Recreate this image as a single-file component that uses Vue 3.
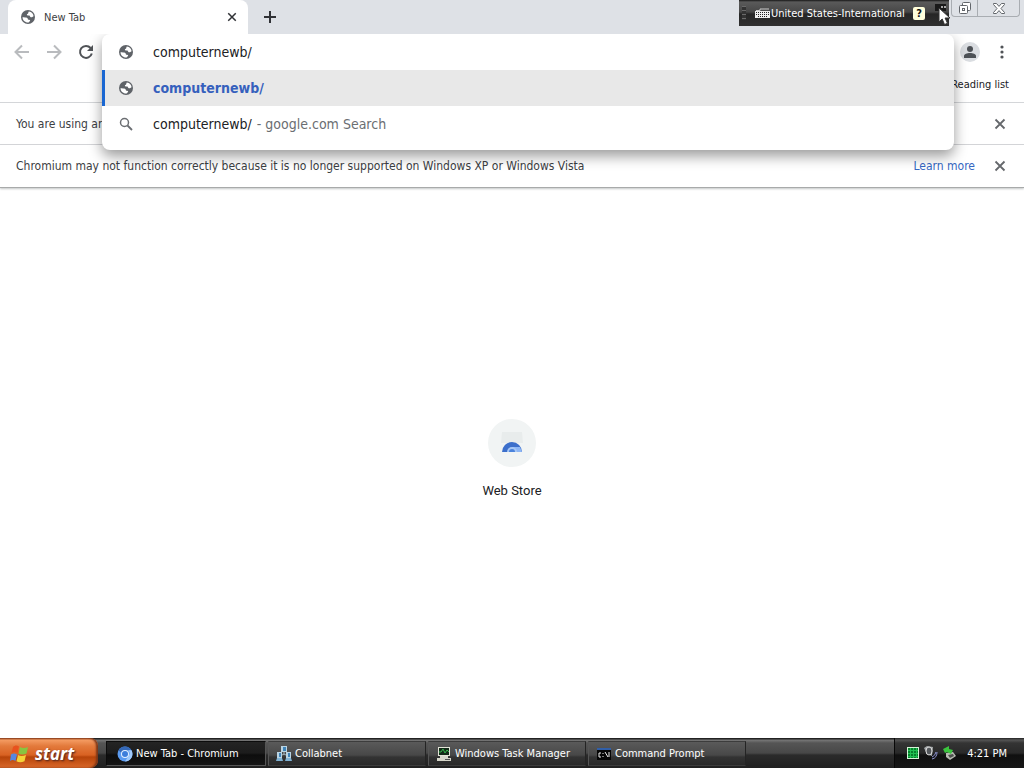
<template>
  <div class="desktop">
    <svg class="symbols" aria-hidden="true">
      <symbol id="globe" viewBox="0 0 16 16">
        <circle cx="8" cy="8" r="7" fill="#5f6368" />
        <path d="M9 2.6c2.5.4 4.4 2.3 4.6 4.7-1 .5-1.7 1.3-2.9.9-1-.4-.5-1.4-1.5-1.7-1-.2-2 .3-2.3-.7-.2-1 .9-.8 1.3-1.5.3-.6 0-1.3.8-1.7z" fill="#fff" />
        <path d="M2.5 8.2c1.5.3 3.7-.1 4.8.7.8.6.2 1.6 1.2 1.8 1 .1 1.8.1 1.6 1-.2.7-1 .9-1.5 1.7-3.4.3-6-2-6.1-5.2z" fill="#fff" />
      </symbol>
      <symbol id="cross" viewBox="0 0 12 12">
        <path d="M1.5 1.5l9 9M10.5 1.5l-9 9" fill="none" stroke="currentColor" stroke-width="1.8" />
      </symbol>
    </svg>

    <!-- Tab strip -->
    <header class="tab-strip">
      <div class="tab">
        <svg class="icon"><use href="#globe" /></svg>
        <span class="tab-title">New Tab</span>
        <button class="tab-close" aria-label="Close tab">
          <svg class="cross-small"><use href="#cross" /></svg>
        </button>
      </div>
      <button class="new-tab" aria-label="New tab">
        <svg width="12" height="12" viewBox="0 0 12 12">
          <path d="M6 0v12M0 6h12" stroke="#303236" stroke-width="2" />
        </svg>
      </button>
      <div class="window-buttons">
        <button class="window-button restore" aria-label="Restore">
          <svg width="14" height="14" viewBox="0 0 14 14" fill="#fff" stroke="#62666b">
            <rect x="4.5" y="1.5" width="8" height="8" rx="1" />
            <rect x="1.5" y="4.5" width="8" height="8" rx="1" />
            <rect x="4.5" y="7.5" width="2" height="2" />
          </svg>
        </button>
        <button class="window-button close" aria-label="Close window">
          <svg width="12" height="11" viewBox="0 0 12 11" fill="#fff" stroke="#62666b">
            <path d="M.5.5h3L6 3.4 8.500.5h3v1L8 5.500l3.500 4v1h-3L6 7.600 3.500 10.500h-3v-1L4 5.500l-3.500-4z" />
          </svg>
        </button>
      </div>
    </header>

    <!-- Language bar -->
    <div class="language-bar">
      <span class="grip"></span>
      <svg width="15" height="10" viewBox="0 0 15 10">
        <path d="M1 2.5h4V1h9" fill="none" stroke="#ccc" />
        <rect x="0" y="3" width="15" height="7" fill="#eee" />
        <path d="M1 4.5h13M1 6.5h13M3 8.5h9" stroke="#222" stroke-dasharray="1 1" />
      </svg>
      <span class="language-name">United States-International</span>
      <button class="language-help" aria-label="Help">?</button>
      <svg class="cursor" width="16" height="22" viewBox="0 0 16 22">
        <path d="M0 0h11v7H0z" fill="#191919" />
        <path d="M6 3h2M9 3h2" stroke="#aaa" stroke-width="2" />
        <path d="M4 4v14l3.2-3 2.3 5.5 3-1.2-2.4-5.3H15z" fill="#fff" stroke="#333" />
      </svg>
    </div>

    <!-- Toolbar -->
    <div class="toolbar">
      <nav class="nav-buttons">
        <button class="nav-button muted" aria-label="Back">
          <svg width="16" height="16" viewBox="0 0 16 16"><path d="M15 8H2M8 1.5L1.5 8 8 14.5" /></svg>
        </button>
        <button class="nav-button muted" aria-label="Forward">
          <svg width="16" height="16" viewBox="0 0 16 16"><path d="M1 8h13M8 1.5L14.5 8 8 14.5" /></svg>
        </button>
        <button class="nav-button" aria-label="Reload">
          <svg width="16" height="16" viewBox="0 0 16 16">
            <path d="M12.6 4A6 6 0 1 0 13.8 9.5" />
            <path d="M15 1v6H9z" fill="#505357" stroke="none" />
          </svg>
        </button>
      </nav>
      <div class="toolbar-end">
        <button class="avatar" aria-label="Profile">
          <svg width="14" height="14" viewBox="0 0 14 14" fill="#4d5156">
            <circle cx="7" cy="4" r="3" />
            <path d="M1 13v-2c0-2 3-3 6-3s6 1 6 3v2z" />
          </svg>
        </button>
        <button class="menu" aria-label="Menu">
          <svg width="4" height="14" viewBox="0 0 4 14" fill="#505357">
            <circle cx="2" cy="2" r="1.6" />
            <circle cx="2" cy="7" r="1.6" />
            <circle cx="2" cy="12" r="1.6" />
          </svg>
        </button>
      </div>
    </div>

    <!-- Address box and suggestions -->
    <div class="omnibox">
      <div class="omnibox-row">
        <svg class="icon"><use href="#globe" /></svg>
        <input v-model="address" class="address" type="text" aria-label="Address" />
      </div>
      <div class="omnibox-row selected">
        <svg class="icon"><use href="#globe" /></svg>
        <a class="match" href="#">computernewb/</a>
      </div>
      <div class="omnibox-row">
        <svg class="icon" viewBox="0 0 16 16" fill="none" stroke="#6b6e72">
          <circle cx="6.5" cy="6.5" r="4" stroke-width="1.5" />
          <path d="M9.5 9.5l4.5 4.5" stroke-width="1.8" />
        </svg>
        <a class="suggestion" href="#">computernewb/<span class="source">- google.com Search</span></a>
      </div>
    </div>

    <div class="bookmark-bar">
      <button class="reading-list">Reading list</button>
    </div>

    <!-- Warnings -->
    <div v-for="bar in infobars" :key="bar.text" class="infobar">
      <span class="infobar-text">{{ bar.text }}</span>
      <a v-if="bar.link" class="infobar-link" href="#">{{ bar.link }}</a>
      <button class="infobar-close" aria-label="Dismiss">
        <svg class="cross-large"><use href="#cross" /></svg>
      </button>
    </div>

    <!-- New tab page -->
    <main class="page">
      <a class="shortcut" href="#">
        <span class="shortcut-icon">
          <svg width="24" height="24" viewBox="0 0 24 24">
            <path d="M2 1h20l1 11H1z" fill="#e8ecec" />
            <path d="M2 21a10 10 0 0 1 20 0z" fill="#3c6fcb" />
            <path d="M12 16h8l2 5H12z" fill="#8db6f5" />
            <path d="M7 21a5 5 0 0 1 10 0z" fill="#a7c7f5" />
            <path d="M9 21a3 3 0 0 1 6 0z" fill="#4b83dc" />
          </svg>
        </span>
        <span class="shortcut-name">Web Store</span>
      </a>
    </main>

    <!-- Taskbar -->
    <footer class="taskbar">
      <button class="start">
        <svg width="20" height="19" viewBox="0 0 20 19">
          <path d="M3 3c2-2 4-2 6-.5L7.5 9C5.5 7.5 3.5 7.5 1.5 9z" fill="#e8521e" />
          <path d="M10 3c2 1.4 5 1.4 8 0l-1.5 6.5c-3 1.3-6 1.2-8 0z" fill="#88c440" />
          <path d="M1 10.5c2-1.5 4-1.5 6 0L5.5 17c-2-1.5-3.5-1.5-5.500 0z" fill="#5787e0" />
          <path d="M8 11c2 1.4 5 1.4 8 0l-1.5 6.2c-3 1.3-6 1.2-8 0z" fill="#f5d338" />
        </svg>
        <span>start</span>
      </button>
      <div class="tasks">
        <button v-for="task in tasks" :key="task.name" class="task" :class="{ active: task.active }">
          <svg class="icon" viewBox="0 0 16 16">
            <g v-if="task.icon === 'chromium'">
              <circle cx="8" cy="8" r="7.5" fill="#5b9bf0" />
              <path d="M8 .5a7.5 7.5 0 0 1 6.5 3.8H8A4 4 0 0 0 4.4 7L1.5 4.2A7.5 7.5 0 0 1 8 .5z" fill="#3468b8" />
              <path d="M14.5 4.3A7.5 7.5 0 0 1 8 15.5l3.5-5.6a4 4 0 0 0-.3-5.6z" fill="#9fc9fb" />
              <circle cx="8" cy="8" r="4" fill="#e6f1ff" />
              <circle cx="8" cy="8" r="3" fill="#3d7edb" />
            </g>
            <g v-else-if="task.icon === 'network'">
              <path d="M8 5v4M4 10l4-2 4 2" fill="none" stroke="#9db1bb" />
              <path d="M5 0h6v6H5zM1 6h5v6H1zM10 6h5v6h-5z" fill="#b9d3e2" />
              <path d="M7 1h3v4H7zM3 7h2v4H3zM12 7h2v4h-2z" fill="#3f83b8" />
              <path d="M1 12h5l1 3H0zM10 12h5l1 3H9z" fill="#7fb2d4" />
            </g>
            <g v-else-if="task.icon === 'monitor'">
              <path d="M2 1h12v9H2z" fill="#e4e4d8" />
              <path d="M3 2h10v7H3z" fill="#132a18" />
              <path d="M3 6h2l2-3 2 4 2-3 2 2" fill="none" stroke="#35b44a" />
              <path d="M4 10h8v2H4zM1 12h14v3H1z" fill="#d6d6ca" />
              <path d="M9 13.5h5" stroke="#555" />
            </g>
            <g v-else>
              <path d="M1 2h14v12H1z" fill="#050505" />
              <path d="M1 2h14v2H1z" fill="#315fa8" />
              <path d="M5 7H3v4h2M7 7v1M7 10v1M9 6l3 5M13 6v5" fill="none" stroke="#eee" />
            </g>
          </svg>
          <span>{{ task.name }}</span>
        </button>
      </div>
      <div class="tray">
        <svg width="14" height="14" viewBox="0 0 14 14">
          <rect x="1.5" y="1.5" width="11" height="11" fill="#07812c" stroke="#d6f5d8" />
          <path d="M2 4.5h10M2 7.5h10M2 10.5h10M4.5 2v10M7.5 2v10M10.5 2v10" stroke="#21c052" />
        </svg>
        <svg width="16" height="16" viewBox="0 0 16 16">
          <path d="M1 3l3-2 6 1-1 9-5-2z" fill="#a4a8ab" />
          <ellipse cx="6" cy="6" rx="3" ry="4" fill="#54585c" stroke="#ddd" />
          <path d="M9 14q5-1 5-7M9 12q3-1 4-5" fill="none" stroke="#8d92cf" />
        </svg>
        <svg width="15" height="16" viewBox="0 0 15 16">
          <path d="M4 8l7-1 3 4-6 4-4-3z" fill="#b8bbb2" />
          <path d="M6 10l5-1 1 2-4 2z" fill="#4d514d" />
          <path d="M1 4l6-3v3l4 1-2 4-4-2-2 1z" fill="#3bc53e" />
        </svg>
        <time class="clock">4:21 PM</time>
      </div>
    </footer>
  </div>
</template>

<script setup>
import { ref } from 'vue'

const address = ref('computernewb/')

const infobars = [
  { text: 'You are using an' },
  {
    text: 'Chromium may not function correctly because it is no longer supported on Windows XP or Windows Vista',
    link: 'Learn more'
  }
]

const tasks = [
  { name: 'New Tab - Chromium', icon: 'chromium', active: true },
  { name: 'Collabnet', icon: 'network' },
  { name: 'Windows Task Manager', icon: 'monitor' },
  { name: 'Command Prompt', icon: 'console' }
]
</script>

<style>
body {
  margin: 0;
}
</style>

<style scoped>
.desktop {
  position: relative;
  display: flex;
  flex-direction: column;
  min-height: 100vh;
  background: #fff;
  color: #3c4043;
  font-family: "DejaVu Sans Condensed", "Noto Sans", sans-serif;
  font-size: 12px;
}

button {
  padding: 0;
  border: none;
  background: none;
  color: inherit;
  font: inherit;
}

a {
  color: inherit;
  text-decoration: none;
}

svg {
  flex: none;
}

.symbols {
  position: absolute;
  width: 0;
  height: 0;
}

.icon {
  width: 16px;
  height: 16px;
}

/* Tab strip */
.tab-strip {
  display: flex;
  height: 34px;
  padding-left: 8px;
  background: #dee1e6;
}

.tab {
  display: flex;
  align-items: center;
  gap: 8px;
  box-sizing: border-box;
  width: 240px;
  padding: 0 10px 0 12px;
  border-radius: 8px 8px 0 0;
  background: #fff;
}

.tab-title {
  flex: 1;
  font-size: 11px;
}

.tab-close {
  display: flex;
  padding: 1px;
  color: #303236;
}

.cross-small {
  width: 10px;
  height: 10px;
}

.new-tab {
  display: flex;
  align-items: center;
  margin-left: 16px;
}

.window-buttons {
  display: flex;
  box-sizing: border-box;
  height: 17px;
  margin: 0 4px 0 auto;
  border: 1px solid #a9adb2;
  border-top: none;
  border-radius: 0 0 4px 4px;
}

.window-button {
  display: flex;
  align-items: center;
  justify-content: center;
}

.restore {
  width: 26px;
  border-right: 1px solid #a9adb2;
}

.close {
  width: 41px;
}

/* Language bar floats over the window frame */
.language-bar {
  position: absolute;
  z-index: 3;
  top: 0;
  right: 75px;
  display: flex;
  align-items: center;
  box-sizing: border-box;
  width: 210px;
  height: 26px;
  padding-left: 3px;
  background: linear-gradient(#171717 0, #5a5a5a 2px, #474747 12px, #262626 14px, #303030 100%);
  color: #fff;
  font-size: 11px;
}

.grip {
  width: 4px;
  height: 14px;
  margin-right: 9px;
  background: repeating-linear-gradient(#6a6a6a 0, #6a6a6a 1px, #333 1px, #333 4px);
}

.language-name {
  flex: 1;
  margin-left: 1px;
  white-space: nowrap;
}

.language-help {
  width: 12px;
  height: 13px;
  border-radius: 2px;
  background: #ffffdc;
  color: #111;
  font-size: 11px;
  font-weight: 700;
  line-height: 13px;
}

.cursor {
  margin: 4px -2px 0 10px;
}

/* Toolbar */
.toolbar {
  display: flex;
  align-items: center;
  justify-content: space-between;
  height: 36px;
  padding: 0 20px 0 14px;
}

.nav-buttons {
  display: flex;
  gap: 16px;
}

.nav-button {
  display: flex;
}

.nav-button svg {
  fill: none;
  stroke: #505357;
  stroke-width: 2;
}

.nav-button.muted svg {
  stroke: #b9bbbe;
}

.toolbar-end {
  display: flex;
  align-items: center;
  gap: 20px;
}

.avatar {
  display: flex;
  align-items: center;
  justify-content: center;
  width: 20px;
  height: 20px;
  border-radius: 50%;
  background: #dadde1;
}

.menu {
  display: flex;
}

/* Address box */
.omnibox {
  position: absolute;
  z-index: 2;
  top: 34px;
  left: 102px;
  right: 70px;
  padding-bottom: 8px;
  border-radius: 8px;
  background: #fff;
  box-shadow: 0 6px 14px rgba(0, 0, 0, 0.4);
  clip-path: inset(0 -20px -24px -20px);
  font-size: 14px;
}

.omnibox-row {
  display: flex;
  align-items: center;
  gap: 19px;
  box-sizing: border-box;
  height: 36px;
  padding: 0 16px;
}

.omnibox-row.selected {
  padding-left: 13px;
  border-left: 3px solid #1a67d2;
  background: #e8e8e8;
}

.address {
  flex: 1;
  padding: 0;
  border: none;
  outline: none;
  background: none;
  color: #202124;
  font: inherit;
}

.match {
  color: #3560bd;
  font-weight: 700;
}

.suggestion {
  color: #202124;
}

.source {
  margin-left: 5px;
  color: #6b6e72;
}

.bookmark-bar {
  display: flex;
  justify-content: flex-end;
  align-items: center;
  box-sizing: border-box;
  height: 33px;
  padding: 0 15px 4px 0;
  border-bottom: 1px solid #d4d6d9;
}

.reading-list {
  color: #202124;
  font-size: 11px;
}

/* Warnings */
.infobar {
  display: flex;
  align-items: center;
  box-sizing: border-box;
  height: 42px;
  padding: 0 18px 0 16px;
  border-bottom: 1px solid #d4d6d9;
}

.infobar:nth-last-child(3) {
  height: 43px;
  border-bottom: 1px solid #a8aaaa;
  box-shadow: 0 1px 2px #c4c6c6;
}

.infobar-text {
  flex: 1;
}

.infobar-link {
  margin-right: 19px;
  color: #3567c2;
}

.infobar-close {
  display: flex;
  color: #65686c;
}

.cross-large {
  width: 12px;
  height: 12px;
}

/* New tab page */
.page {
  display: flex;
  flex: 1;
  flex-direction: column;
  align-items: center;
  justify-content: center;
  padding-bottom: 9px;
}

.shortcut {
  display: flex;
  flex-direction: column;
  align-items: center;
  gap: 16px;
  color: #202124;
  font-family: Roboto, sans-serif;
}

.shortcut-icon {
  display: flex;
  align-items: center;
  justify-content: center;
  width: 48px;
  height: 48px;
  border-radius: 50%;
  background: #f1f4f4;
}

.shortcut-name {
  font-size: 13px;
  line-height: 16px;
}

/* Taskbar */
.taskbar {
  display: flex;
  height: 30px;
  background: linear-gradient(#222 0, #222 1px, #777 2px, #555 5px, #484848 15px, #2b2b2b 17px, #202020 100%);
  color: #fff;
  font-size: 11px;
}

.start {
  display: flex;
  align-items: center;
  gap: 5px;
  box-sizing: border-box;
  width: 98px;
  padding-left: 10px;
  border-radius: 0 8px 8px 0;
  background: linear-gradient(#8a3a18 0, #f49b62 2px, #e37a3c 8px, #d96222 17px, #b74409 19px, #d9682a 100%);
  box-shadow: inset -2px 0 2px #7b3517;
  font-family: "Open Sans", sans-serif;
  font-size: 17px;
  font-style: italic;
  font-weight: 700;
  text-shadow: 1px 1px 2px #422;
}

.tasks {
  display: flex;
  flex: 1;
  gap: 2px;
  padding: 3px 0 2px 8px;
}

.task {
  display: flex;
  align-items: center;
  gap: 3px;
  box-sizing: border-box;
  width: 158px;
  padding-left: 7px;
  border: 1px solid #3c3c3c;
  border-left-color: #555;
  border-right-color: #242424;
  background: linear-gradient(#5a5a5a 0, #484848 13px, #333 15px, #292929 100%);
  white-space: nowrap;
}

.task.active {
  width: 160px;
  padding-left: 10px;
  border-color: #0c0c0c #555 #555 #0c0c0c;
  background: linear-gradient(#242424 0, #1c1c1c 11px, #0d0d0d 13px, #151515 100%);
}

.tray {
  display: flex;
  align-items: center;
  gap: 3px;
  padding: 0 17px 0 11px;
  border-left: 1px solid #080808;
  background: linear-gradient(#222 0, #555 2px, #343434 5px, #292929 15px, #101010 17px, #161616 100%);
}

.clock {
  margin-left: 7px;
}
</style>
